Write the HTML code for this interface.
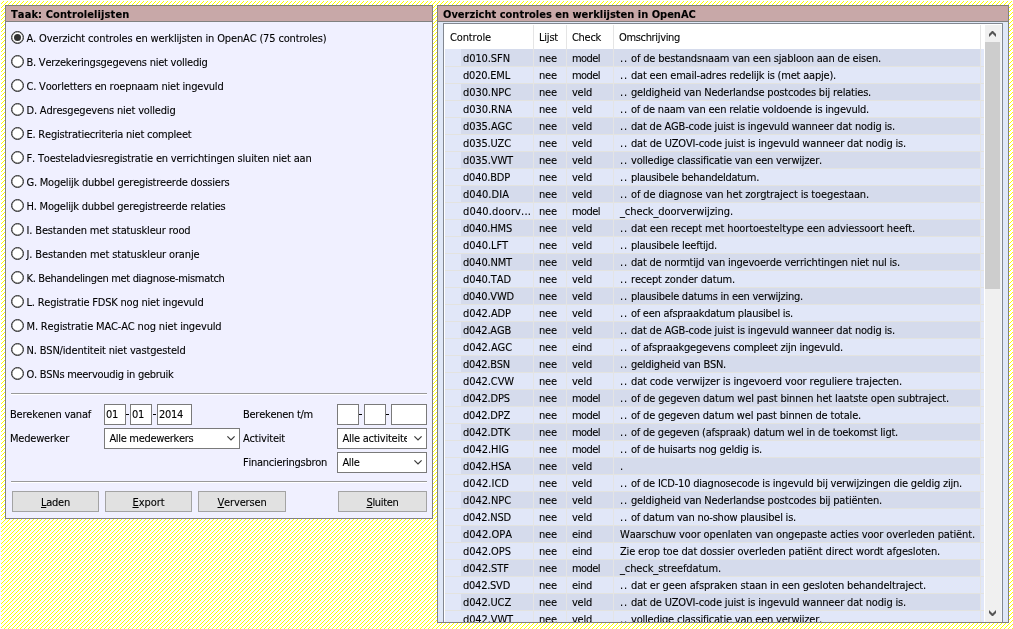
<!DOCTYPE html>
<html lang="nl"><head><meta charset="utf-8"><title>Controlelijsten</title>
<style>
html,body{margin:0;padding:0;}
body{width:1013px;height:629px;overflow:hidden;background:#fff;position:relative;
 font-family:"DejaVu Sans Condensed","DejaVu Sans","Liberation Sans",sans-serif;font-size:11px;color:#000;line-height:13px;letter-spacing:-0.13px;-webkit-text-stroke:0.1px #000;font-kerning:none;}
*{box-sizing:border-box;}
#hatch{position:absolute;left:0;top:0;}
.panel{position:absolute;border:1px solid #808080;overflow:hidden;will-change:transform;}
.ptitle{position:absolute;left:0;top:0;right:0;height:16px;background:#c8a8a8;border-bottom:1px solid #808080;
 font-weight:bold;padding-left:5px;line-height:13px;padding-top:2px;letter-spacing:0.04px;white-space:nowrap;}
#left{left:5px;top:5px;width:428px;height:514px;background:#f0f0ff;}
#right{left:437px;top:5px;width:572px;height:618px;background:#e0e8f8;}
.abs{position:absolute;white-space:nowrap;}
.radio{position:absolute;left:5px;width:13px;height:13px;border-radius:50%;border:1px solid #2b2b2b;background:#fff;box-shadow:inset 0 0 0 0.5px #777;}
.radio.on:after{content:"";position:absolute;left:2px;top:2px;width:7px;height:7px;border-radius:50%;background:#333;}
.rl{position:absolute;left:20.5px;margin-top:1px;white-space:nowrap;letter-spacing:-0.13px;}
.hr{position:absolute;left:5px;width:416px;height:2px;border-top:1px solid #999;border-bottom:1px solid #fff;}
.inp{position:absolute;height:21px;background:#fff;border:1px solid #7a7a7a;padding:3px 0 0 1px;white-space:nowrap;overflow:hidden;}
.sel{position:absolute;height:21px;background:#fff;border:1px solid #7a7a7a;padding:3px 0 0 4.4px;white-space:nowrap;overflow:hidden;}
.sel svg{position:absolute;right:4px;top:7px;}
.dash{position:absolute;width:3px;height:1px;background:#000;top:408px;}
.btn{position:absolute;top:485px;height:21px;background:#e1e1e1;border:1px solid #a3a3a3;text-align:center;padding-top:4px;}
.btn u{text-decoration:underline;}
.lbl{position:absolute;white-space:nowrap;}
#lv{position:absolute;left:5px;top:17px;width:560px;height:620px;border:1px solid #828790;background:#fff;overflow:hidden;}
#lvin{position:absolute;left:1px;top:1px;width:540px;height:600px;}
.hd{position:absolute;top:0;height:24px;padding:6px 0 0 5px;white-space:nowrap;}
.vs{position:absolute;top:0;width:1px;height:24px;background:#e5e5e5;}
.row{position:absolute;left:0;width:539px;height:17px;background:#e1e7f8;border-top:1px solid #e3e3df;}
.row.d .c{background:#d5dbec;}
.c{position:absolute;top:0;height:16px;padding:2px 0 0 5px;white-space:nowrap;overflow:hidden;}
.row.first{border-top-color:#e1e7f8;}
.row.first.d .c{top:-1px;height:17px;padding-top:3px;}
.gs{position:absolute;top:24px;width:1px;height:600px;background:#e4e4e4;}
#sb{position:absolute;left:540px;top:0px;width:17px;height:598px;background:#f0f0f0;border-right:1px solid #f4f7fd;}
#thumb{position:absolute;left:0;top:17px;width:15px;height:247px;background:#cdcdcd;}
</style></head>
<body>
<svg id="hatch" width="1013" height="629" shape-rendering="crispEdges"><defs><pattern id="hp" width="4" height="4" patternUnits="userSpaceOnUse"><rect x="0" y="0" width="1" height="1" fill="#ffff00"/><rect x="1" y="3" width="1" height="1" fill="#ffff00"/><rect x="2" y="2" width="1" height="1" fill="#ffff00"/><rect x="3" y="1" width="1" height="1" fill="#ffff00"/></pattern></defs><rect x="1" y="1" width="1012" height="628" fill="url(#hp)"/></svg>
<div class="panel" id="left">
<div class="ptitle" style="letter-spacing:0.1px">Taak: Controlelijsten</div>
<div class="radio on" style="top:25px"></div><div class="rl" style="top:25px;letter-spacing:-0.151px">A. Overzicht controles en werklijsten in OpenAC (75 controles)</div>
<div class="radio" style="top:49px"></div><div class="rl" style="top:49px;letter-spacing:-0.239px">B. Verzekeringsgegevens niet volledig</div>
<div class="radio" style="top:73px"></div><div class="rl" style="top:73px;letter-spacing:-0.202px">C. Voorletters en roepnaam niet ingevuld</div>
<div class="radio" style="top:97px"></div><div class="rl" style="top:97px;letter-spacing:-0.183px">D. Adresgegevens niet volledig</div>
<div class="radio" style="top:121px"></div><div class="rl" style="top:121px;letter-spacing:-0.223px">E. Registratiecriteria niet compleet</div>
<div class="radio" style="top:145px"></div><div class="rl" style="top:145px;letter-spacing:-0.181px">F. Toesteladviesregistratie en verrichtingen sluiten niet aan</div>
<div class="radio" style="top:169px"></div><div class="rl" style="top:169px;letter-spacing:-0.222px">G. Mogelijk dubbel geregistreerde dossiers</div>
<div class="radio" style="top:193px"></div><div class="rl" style="top:193px;letter-spacing:-0.219px">H. Mogelijk dubbel geregistreerde relaties</div>
<div class="radio" style="top:217px"></div><div class="rl" style="top:217px;letter-spacing:-0.149px">I. Bestanden met statuskleur rood</div>
<div class="radio" style="top:241px"></div><div class="rl" style="top:241px;letter-spacing:-0.136px">J. Bestanden met statuskleur oranje</div>
<div class="radio" style="top:265px"></div><div class="rl" style="top:265px;letter-spacing:-0.324px">K. Behandelingen met diagnose-mismatch</div>
<div class="radio" style="top:289px"></div><div class="rl" style="top:289px;letter-spacing:-0.203px">L. Registratie FDSK nog niet ingevuld</div>
<div class="radio" style="top:313px"></div><div class="rl" style="top:313px;letter-spacing:-0.152px">M. Registratie MAC-AC nog niet ingevuld</div>
<div class="radio" style="top:337px"></div><div class="rl" style="top:337px;letter-spacing:-0.173px">N. BSN/identiteit niet vastgesteld</div>
<div class="radio" style="top:361px"></div><div class="rl" style="top:361px;letter-spacing:-0.277px">O. BSNs meervoudig in gebruik</div>
<div class="hr" style="top:387px"></div>
<div class="lbl" style="left:4px;top:402px;letter-spacing:-0.225px">Berekenen vanaf</div>
<div class="inp" style="left:98px;top:398px;width:22px;letter-spacing:-0.297px">01</div><div class="dash" style="left:120px"></div><div class="inp" style="left:124px;top:398px;width:22px;letter-spacing:-0.297px">01</div><div class="dash" style="left:147px"></div><div class="inp" style="left:151px;top:398px;width:35px;letter-spacing:-0.297px">2014</div>
<div class="lbl" style="left:237px;top:402px;letter-spacing:-0.269px">Berekenen t/m</div>
<div class="inp" style="left:331px;top:398px;width:22px"></div><div class="dash" style="left:353px"></div><div class="inp" style="left:358px;top:398px;width:22px"></div><div class="dash" style="left:380px"></div><div class="inp" style="left:385px;top:398px;width:36px"></div>
<div class="lbl" style="left:4px;top:426px;letter-spacing:-0.216px">Medewerker</div>
<div class="sel" style="left:98px;top:422px;width:136px;letter-spacing:-0.307px">Alle medewerkers<svg width="8" height="5" viewBox="0 0 8 5"><path d="M0.4 0.4 L4 4 L7.6 0.4" fill="none" stroke="#3a3a3a" stroke-width="1.2"/></svg></div>
<div class="lbl" style="left:237px;top:426px;letter-spacing:-0.205px">Activiteit</div>
<div class="sel" style="left:331px;top:422px;width:90px;letter-spacing:-0.247px"><span style="display:block;width:64.6px;overflow:hidden">Alle activiteiten</span><svg width="8" height="5" viewBox="0 0 8 5"><path d="M0.4 0.4 L4 4 L7.6 0.4" fill="none" stroke="#3a3a3a" stroke-width="1.2"/></svg></div>
<div class="lbl" style="left:237px;top:450px;letter-spacing:-0.267px">Financieringsbron</div>
<div class="sel" style="left:331px;top:446px;width:90px;letter-spacing:-0.340px">Alle<svg width="8" height="5" viewBox="0 0 8 5"><path d="M0.4 0.4 L4 4 L7.6 0.4" fill="none" stroke="#3a3a3a" stroke-width="1.2"/></svg></div>
<div class="hr" style="top:475px"></div>
<div class="btn" style="left:6px;width:87px;letter-spacing:-0.247px"><u>L</u>aden</div><div class="btn" style="left:99px;width:87px;letter-spacing:-0.065px"><u>E</u>xport</div><div class="btn" style="left:192px;width:88px;letter-spacing:-0.163px"><u>V</u>erversen</div><div class="btn" style="left:332px;width:89px;letter-spacing:-0.330px"><u>S</u>luiten</div>
</div>
<div class="panel" id="right">
<div class="ptitle" style="letter-spacing:0px">Overzicht controles en werklijsten in OpenAC</div>
<div id="lv"><div id="lvin">
<div class="hd" style="left:0px;width:88px;letter-spacing:-0.135px">Controle</div><div class="hd" style="left:89px;width:32px;letter-spacing:-0.209px">Lijst</div><div class="hd" style="left:122px;width:46px;letter-spacing:-0.291px">Check</div><div class="hd" style="left:169px;width:366px;letter-spacing:-0.336px">Omschrijving</div><div class="vs" style="left:88px"></div><div class="vs" style="left:121px"></div><div class="vs" style="left:168px"></div><div class="vs" style="left:535px"></div>
<div class="row d first" style="top:24px"><div class="c" style="left:16px;width:72px;padding-left:2px;letter-spacing:-0.088px">d010.SFN</div><div class="c" style="left:89px;width:32px;letter-spacing:-0.156px">nee</div><div class="c" style="left:122px;width:46px;letter-spacing:-0.566px">model</div><div class="c" style="left:169px;width:366px;padding-left:6px;letter-spacing:0"><span style="letter-spacing:0.852px">..</span><span style="display:inline-block;width:3px"></span><span style="letter-spacing:-0.175px">of de bestandsnaam van een sjabloon aan de eisen.</span></div></div>
<div class="row" style="top:41px"><div class="c" style="left:16px;width:72px;padding-left:2px;letter-spacing:-0.203px">d020.EML</div><div class="c" style="left:89px;width:32px;letter-spacing:-0.156px">nee</div><div class="c" style="left:122px;width:46px;letter-spacing:-0.566px">model</div><div class="c" style="left:169px;width:366px;padding-left:6px;letter-spacing:0"><span style="letter-spacing:0.852px">..</span><span style="display:inline-block;width:3px"></span><span style="letter-spacing:-0.210px">dat een email-adres redelijk is (met aapje).</span></div></div>
<div class="row d" style="top:58px"><div class="c" style="left:16px;width:72px;padding-left:2px;letter-spacing:-0.074px">d030.NPC</div><div class="c" style="left:89px;width:32px;letter-spacing:-0.156px">nee</div><div class="c" style="left:122px;width:46px;letter-spacing:-0.246px">veld</div><div class="c" style="left:169px;width:366px;padding-left:6px;letter-spacing:0"><span style="letter-spacing:0.852px">..</span><span style="display:inline-block;width:3px"></span><span style="letter-spacing:-0.209px">geldigheid van Nederlandse postcodes bij relaties.</span></div></div>
<div class="row" style="top:75px"><div class="c" style="left:16px;width:72px;padding-left:2px;letter-spacing:-0.045px">d030.RNA</div><div class="c" style="left:89px;width:32px;letter-spacing:-0.156px">nee</div><div class="c" style="left:122px;width:46px;letter-spacing:-0.246px">veld</div><div class="c" style="left:169px;width:366px;padding-left:6px;letter-spacing:0"><span style="letter-spacing:0.852px">..</span><span style="display:inline-block;width:3px"></span><span style="letter-spacing:-0.220px">of de naam van een relatie voldoende is ingevuld.</span></div></div>
<div class="row d" style="top:92px"><div class="c" style="left:16px;width:72px;padding-left:2px;letter-spacing:-0.084px">d035.AGC</div><div class="c" style="left:89px;width:32px;letter-spacing:-0.156px">nee</div><div class="c" style="left:122px;width:46px;letter-spacing:-0.246px">veld</div><div class="c" style="left:169px;width:366px;padding-left:6px;letter-spacing:0"><span style="letter-spacing:0.852px">..</span><span style="display:inline-block;width:3px"></span><span style="letter-spacing:-0.195px">dat de AGB-code juist is ingevuld wanneer dat nodig is.</span></div></div>
<div class="row" style="top:109px"><div class="c" style="left:16px;width:72px;padding-left:2px;letter-spacing:-0.156px">d035.UZC</div><div class="c" style="left:89px;width:32px;letter-spacing:-0.156px">nee</div><div class="c" style="left:122px;width:46px;letter-spacing:-0.246px">veld</div><div class="c" style="left:169px;width:366px;padding-left:6px;letter-spacing:0"><span style="letter-spacing:0.852px">..</span><span style="display:inline-block;width:3px"></span><span style="letter-spacing:-0.175px">dat de UZOVI-code juist is ingevuld wanneer dat nodig is.</span></div></div>
<div class="row d" style="top:126px"><div class="c" style="left:16px;width:72px;padding-left:2px;letter-spacing:-0.115px">d035.VWT</div><div class="c" style="left:89px;width:32px;letter-spacing:-0.156px">nee</div><div class="c" style="left:122px;width:46px;letter-spacing:-0.246px">veld</div><div class="c" style="left:169px;width:366px;padding-left:6px;letter-spacing:0"><span style="letter-spacing:0.852px">..</span><span style="display:inline-block;width:3px"></span><span style="letter-spacing:-0.214px">volledige classificatie van een verwijzer.</span></div></div>
<div class="row" style="top:143px"><div class="c" style="left:16px;width:72px;padding-left:2px;letter-spacing:-0.213px">d040.BDP</div><div class="c" style="left:89px;width:32px;letter-spacing:-0.156px">nee</div><div class="c" style="left:122px;width:46px;letter-spacing:-0.246px">veld</div><div class="c" style="left:169px;width:366px;padding-left:6px;letter-spacing:0"><span style="letter-spacing:0.852px">..</span><span style="display:inline-block;width:3px"></span><span style="letter-spacing:-0.281px">plausibele behandeldatum.</span></div></div>
<div class="row d" style="top:160px"><div class="c" style="left:16px;width:72px;padding-left:2px;letter-spacing:0.047px">d040.DIA</div><div class="c" style="left:89px;width:32px;letter-spacing:-0.156px">nee</div><div class="c" style="left:122px;width:46px;letter-spacing:-0.246px">veld</div><div class="c" style="left:169px;width:366px;padding-left:6px;letter-spacing:0"><span style="letter-spacing:0.852px">..</span><span style="display:inline-block;width:3px"></span><span style="letter-spacing:-0.121px">of de diagnose van het zorgtraject is toegestaan.</span></div></div>
<div class="row" style="top:177px"><div class="c" style="left:16px;width:72px;padding-left:2px;letter-spacing:0.149px">d040.doorv...</div><div class="c" style="left:89px;width:32px;letter-spacing:-0.156px">nee</div><div class="c" style="left:122px;width:46px;letter-spacing:-0.566px">model</div><div class="c" style="left:169px;width:366px;padding-left:6px;letter-spacing:0"><span style="letter-spacing:-0.072px">_check_doorverwijzing.</span></div></div>
<div class="row d" style="top:194px"><div class="c" style="left:16px;width:72px;padding-left:2px;letter-spacing:-0.199px">d040.HMS</div><div class="c" style="left:89px;width:32px;letter-spacing:-0.156px">nee</div><div class="c" style="left:122px;width:46px;letter-spacing:-0.246px">veld</div><div class="c" style="left:169px;width:366px;padding-left:6px;letter-spacing:0"><span style="letter-spacing:0.852px">..</span><span style="display:inline-block;width:3px"></span><span style="letter-spacing:-0.130px">dat een recept met hoortoesteltype een adviessoort heeft.</span></div></div>
<div class="row" style="top:211px"><div class="c" style="left:16px;width:72px;padding-left:2px;letter-spacing:-0.070px">d040.LFT</div><div class="c" style="left:89px;width:32px;letter-spacing:-0.156px">nee</div><div class="c" style="left:122px;width:46px;letter-spacing:-0.246px">veld</div><div class="c" style="left:169px;width:366px;padding-left:6px;letter-spacing:0"><span style="letter-spacing:0.852px">..</span><span style="display:inline-block;width:3px"></span><span style="letter-spacing:-0.243px">plausibele leeftijd.</span></div></div>
<div class="row d" style="top:228px"><div class="c" style="left:16px;width:72px;padding-left:2px;letter-spacing:-0.162px">d040.NMT</div><div class="c" style="left:89px;width:32px;letter-spacing:-0.156px">nee</div><div class="c" style="left:122px;width:46px;letter-spacing:-0.246px">veld</div><div class="c" style="left:169px;width:366px;padding-left:6px;letter-spacing:0"><span style="letter-spacing:0.852px">..</span><span style="display:inline-block;width:3px"></span><span style="letter-spacing:-0.209px">dat de normtijd van ingevoerde verrichtingen niet nul is.</span></div></div>
<div class="row" style="top:245px"><div class="c" style="left:16px;width:72px;padding-left:2px;letter-spacing:-0.094px">d040.TAD</div><div class="c" style="left:89px;width:32px;letter-spacing:-0.156px">nee</div><div class="c" style="left:122px;width:46px;letter-spacing:-0.246px">veld</div><div class="c" style="left:169px;width:366px;padding-left:6px;letter-spacing:0"><span style="letter-spacing:0.852px">..</span><span style="display:inline-block;width:3px"></span><span style="letter-spacing:-0.170px">recept zonder datum.</span></div></div>
<div class="row d" style="top:262px"><div class="c" style="left:16px;width:72px;padding-left:2px;letter-spacing:-0.188px">d040.VWD</div><div class="c" style="left:89px;width:32px;letter-spacing:-0.156px">nee</div><div class="c" style="left:122px;width:46px;letter-spacing:-0.246px">veld</div><div class="c" style="left:169px;width:366px;padding-left:6px;letter-spacing:0"><span style="letter-spacing:0.852px">..</span><span style="display:inline-block;width:3px"></span><span style="letter-spacing:-0.253px">plausibele datums in een verwijzing.</span></div></div>
<div class="row" style="top:279px"><div class="c" style="left:16px;width:72px;padding-left:2px;letter-spacing:-0.084px">d042.ADP</div><div class="c" style="left:89px;width:32px;letter-spacing:-0.156px">nee</div><div class="c" style="left:122px;width:46px;letter-spacing:-0.246px">veld</div><div class="c" style="left:169px;width:366px;padding-left:6px;letter-spacing:0"><span style="letter-spacing:0.852px">..</span><span style="display:inline-block;width:3px"></span><span style="letter-spacing:-0.267px">of een afspraakdatum plausibel is.</span></div></div>
<div class="row d" style="top:296px"><div class="c" style="left:16px;width:72px;padding-left:2px;letter-spacing:-0.193px">d042.AGB</div><div class="c" style="left:89px;width:32px;letter-spacing:-0.156px">nee</div><div class="c" style="left:122px;width:46px;letter-spacing:-0.246px">veld</div><div class="c" style="left:169px;width:366px;padding-left:6px;letter-spacing:0"><span style="letter-spacing:0.852px">..</span><span style="display:inline-block;width:3px"></span><span style="letter-spacing:-0.195px">dat de AGB-code juist is ingevuld wanneer dat nodig is.</span></div></div>
<div class="row" style="top:313px"><div class="c" style="left:16px;width:72px;padding-left:2px;letter-spacing:-0.084px">d042.AGC</div><div class="c" style="left:89px;width:32px;letter-spacing:-0.156px">nee</div><div class="c" style="left:122px;width:46px;letter-spacing:-0.352px">eind</div><div class="c" style="left:169px;width:366px;padding-left:6px;letter-spacing:0"><span style="letter-spacing:0.852px">..</span><span style="display:inline-block;width:3px"></span><span style="letter-spacing:-0.234px">of afspraakgegevens compleet zijn ingevuld.</span></div></div>
<div class="row d" style="top:330px"><div class="c" style="left:16px;width:72px;padding-left:2px;letter-spacing:-0.225px">d042.BSN</div><div class="c" style="left:89px;width:32px;letter-spacing:-0.156px">nee</div><div class="c" style="left:122px;width:46px;letter-spacing:-0.246px">veld</div><div class="c" style="left:169px;width:366px;padding-left:6px;letter-spacing:0"><span style="letter-spacing:0.852px">..</span><span style="display:inline-block;width:3px"></span><span style="letter-spacing:-0.260px">geldigheid van BSN.</span></div></div>
<div class="row" style="top:347px"><div class="c" style="left:16px;width:72px;padding-left:2px;letter-spacing:-0.098px">d042.CVW</div><div class="c" style="left:89px;width:32px;letter-spacing:-0.156px">nee</div><div class="c" style="left:122px;width:46px;letter-spacing:-0.246px">veld</div><div class="c" style="left:169px;width:366px;padding-left:6px;letter-spacing:0"><span style="letter-spacing:0.852px">..</span><span style="display:inline-block;width:3px"></span><span style="letter-spacing:-0.138px">dat code verwijzer is ingevoerd voor reguliere trajecten.</span></div></div>
<div class="row d" style="top:364px"><div class="c" style="left:16px;width:72px;padding-left:2px;letter-spacing:-0.148px">d042.DPS</div><div class="c" style="left:89px;width:32px;letter-spacing:-0.156px">nee</div><div class="c" style="left:122px;width:46px;letter-spacing:-0.566px">model</div><div class="c" style="left:169px;width:366px;padding-left:6px;letter-spacing:0"><span style="letter-spacing:0.852px">..</span><span style="display:inline-block;width:3px"></span><span style="letter-spacing:-0.165px">of de gegeven datum wel past binnen het laatste open subtraject.</span></div></div>
<div class="row" style="top:381px"><div class="c" style="left:16px;width:72px;padding-left:2px;letter-spacing:-0.211px">d042.DPZ</div><div class="c" style="left:89px;width:32px;letter-spacing:-0.156px">nee</div><div class="c" style="left:122px;width:46px;letter-spacing:-0.566px">model</div><div class="c" style="left:169px;width:366px;padding-left:6px;letter-spacing:0"><span style="letter-spacing:0.852px">..</span><span style="display:inline-block;width:3px"></span><span style="letter-spacing:-0.188px">of de gegeven datum wel past binnen de totale.</span></div></div>
<div class="row d" style="top:398px"><div class="c" style="left:16px;width:72px;padding-left:2px;letter-spacing:-0.184px">d042.DTK</div><div class="c" style="left:89px;width:32px;letter-spacing:-0.156px">nee</div><div class="c" style="left:122px;width:46px;letter-spacing:-0.566px">model</div><div class="c" style="left:169px;width:366px;padding-left:6px;letter-spacing:0"><span style="letter-spacing:0.852px">..</span><span style="display:inline-block;width:3px"></span><span style="letter-spacing:-0.228px">of de gegeven (afspraak) datum wel in de toekomst ligt.</span></div></div>
<div class="row" style="top:415px"><div class="c" style="left:16px;width:72px;padding-left:2px;letter-spacing:-0.043px">d042.HIG</div><div class="c" style="left:89px;width:32px;letter-spacing:-0.156px">nee</div><div class="c" style="left:122px;width:46px;letter-spacing:-0.566px">model</div><div class="c" style="left:169px;width:366px;padding-left:6px;letter-spacing:0"><span style="letter-spacing:0.852px">..</span><span style="display:inline-block;width:3px"></span><span style="letter-spacing:-0.219px">of de huisarts nog geldig is.</span></div></div>
<div class="row d" style="top:432px"><div class="c" style="left:16px;width:72px;padding-left:2px;letter-spacing:-0.102px">d042.HSA</div><div class="c" style="left:89px;width:32px;letter-spacing:-0.156px">nee</div><div class="c" style="left:122px;width:46px;letter-spacing:-0.246px">veld</div><div class="c" style="left:169px;width:366px;padding-left:6px;letter-spacing:0"><span style="letter-spacing:0.844px">.</span></div></div>
<div class="row" style="top:449px"><div class="c" style="left:16px;width:72px;padding-left:2px;letter-spacing:0.029px">d042.ICD</div><div class="c" style="left:89px;width:32px;letter-spacing:-0.156px">nee</div><div class="c" style="left:122px;width:46px;letter-spacing:-0.246px">veld</div><div class="c" style="left:169px;width:366px;padding-left:6px;letter-spacing:0"><span style="letter-spacing:0.852px">..</span><span style="display:inline-block;width:3px"></span><span style="letter-spacing:-0.214px">of de ICD-10 diagnosecode is ingevuld bij verwijzingen die geldig zijn.</span></div></div>
<div class="row d" style="top:466px"><div class="c" style="left:16px;width:72px;padding-left:2px;letter-spacing:-0.074px">d042.NPC</div><div class="c" style="left:89px;width:32px;letter-spacing:-0.156px">nee</div><div class="c" style="left:122px;width:46px;letter-spacing:-0.246px">veld</div><div class="c" style="left:169px;width:366px;padding-left:6px;letter-spacing:0"><span style="letter-spacing:0.852px">..</span><span style="display:inline-block;width:3px"></span><span style="letter-spacing:-0.200px">geldigheid van Nederlandse postcodes bij patiënten.</span></div></div>
<div class="row" style="top:483px"><div class="c" style="left:16px;width:72px;padding-left:2px;letter-spacing:-0.203px">d042.NSD</div><div class="c" style="left:89px;width:32px;letter-spacing:-0.156px">nee</div><div class="c" style="left:122px;width:46px;letter-spacing:-0.246px">veld</div><div class="c" style="left:169px;width:366px;padding-left:6px;letter-spacing:0"><span style="letter-spacing:0.852px">..</span><span style="display:inline-block;width:3px"></span><span style="letter-spacing:-0.221px">of datum van no-show plausibel is.</span></div></div>
<div class="row d" style="top:500px"><div class="c" style="left:16px;width:72px;padding-left:2px;letter-spacing:0.020px">d042.OPA</div><div class="c" style="left:89px;width:32px;letter-spacing:-0.156px">nee</div><div class="c" style="left:122px;width:46px;letter-spacing:-0.352px">eind</div><div class="c" style="left:169px;width:366px;padding-left:6px;letter-spacing:0"><span style="letter-spacing:-0.128px">Waarschuw voor openlaten van ongepaste acties voor overleden patiënt.</span></div></div>
<div class="row" style="top:517px"><div class="c" style="left:16px;width:72px;padding-left:2px;letter-spacing:-0.045px">d042.OPS</div><div class="c" style="left:89px;width:32px;letter-spacing:-0.156px">nee</div><div class="c" style="left:122px;width:46px;letter-spacing:-0.352px">eind</div><div class="c" style="left:169px;width:366px;padding-left:6px;letter-spacing:0"><span style="letter-spacing:-0.166px">Zie erop toe dat dossier overleden patiënt direct wordt afgesloten.</span></div></div>
<div class="row d" style="top:534px"><div class="c" style="left:16px;width:72px;padding-left:2px;letter-spacing:-0.043px">d042.STF</div><div class="c" style="left:89px;width:32px;letter-spacing:-0.156px">nee</div><div class="c" style="left:122px;width:46px;letter-spacing:-0.566px">model</div><div class="c" style="left:169px;width:366px;padding-left:6px;letter-spacing:0"><span style="letter-spacing:-0.101px">_check_streefdatum.</span></div></div>
<div class="row" style="top:551px"><div class="c" style="left:16px;width:72px;padding-left:2px;letter-spacing:-0.248px">d042.SVD</div><div class="c" style="left:89px;width:32px;letter-spacing:-0.156px">nee</div><div class="c" style="left:122px;width:46px;letter-spacing:-0.352px">eind</div><div class="c" style="left:169px;width:366px;padding-left:6px;letter-spacing:0"><span style="letter-spacing:0.852px">..</span><span style="display:inline-block;width:3px"></span><span style="letter-spacing:-0.157px">dat er geen afspraken staan in een gesloten behandeltraject.</span></div></div>
<div class="row d" style="top:568px"><div class="c" style="left:16px;width:72px;padding-left:2px;letter-spacing:-0.156px">d042.UCZ</div><div class="c" style="left:89px;width:32px;letter-spacing:-0.156px">nee</div><div class="c" style="left:122px;width:46px;letter-spacing:-0.246px">veld</div><div class="c" style="left:169px;width:366px;padding-left:6px;letter-spacing:0"><span style="letter-spacing:0.852px">..</span><span style="display:inline-block;width:3px"></span><span style="letter-spacing:-0.175px">dat de UZOVI-code juist is ingevuld wanneer dat nodig is.</span></div></div>
<div class="row" style="top:585px"><div class="c" style="left:16px;width:72px;padding-left:2px;letter-spacing:-0.115px">d042.VWT</div><div class="c" style="left:89px;width:32px;letter-spacing:-0.156px">nee</div><div class="c" style="left:122px;width:46px;letter-spacing:-0.246px">veld</div><div class="c" style="left:169px;width:366px;padding-left:6px;letter-spacing:0"><span style="letter-spacing:0.852px">..</span><span style="display:inline-block;width:3px"></span><span style="letter-spacing:-0.214px">volledige classificatie van een verwijzer.</span></div></div>
<div class="gs" style="left:88px"></div><div class="gs" style="left:121px"></div><div class="gs" style="left:168px"></div><div class="gs" style="left:535px"></div>
<div id="sb"><div id="thumb"></div><svg class="abs" style="left:4px;top:6px" width="7" height="6" viewBox="0 0 7 6"><path d="M0 3 L3.5 -0.5 L7 3 V6 L3.5 2.5 L0 6 Z" fill="#555"/></svg><svg class="abs" style="left:4px;top:585px" width="7" height="6" viewBox="0 0 7 6"><path d="M0 3 L3.5 6.5 L7 3 V0 L3.5 3.5 L0 0 Z" fill="#555"/></svg></div>
</div></div>
</div>
</body></html>
